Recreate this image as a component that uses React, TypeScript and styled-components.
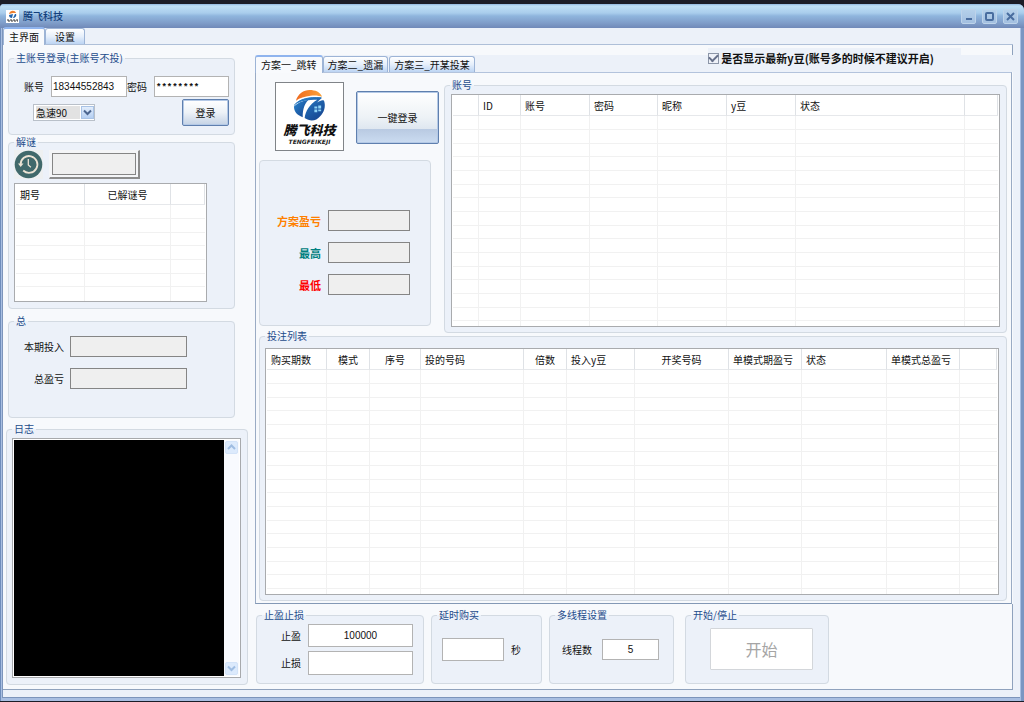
import React from 'react';
import styled, { createGlobalStyle, css } from 'styled-components';

const GlobalStyle = createGlobalStyle`
  * { box-sizing: border-box; }
  body {
    margin: 0;
    background: #1b1d27;
    font: 10px/14px "Noto Sans CJK SC", "Noto Sans", sans-serif;
    color: #111;
  }
  button, input, select, textarea { font: inherit; color: inherit; margin: 0; }
`;

const cjk = '"Noto Sans CJK SC", sans-serif';

/* ---------- window frame ---------- */
const Desktop = styled.div`
  min-height: 100vh;
  display: flex;
  padding: 4px 0 1px;
  background: #1b1d27;
`;
const Window = styled.div`
  flex: 1;
  min-width: 0;
  display: flex;
  flex-direction: column;
  border-radius: 4px 6px 0 0;
  overflow: hidden;
  background: linear-gradient(90deg, #6f8dbb 0 1px, #a9bfe2 1px calc(100% - 3px), #7a96c2 calc(100% - 3px));
`;
const TitleBar = styled.header`
  height: 24px;
  flex: none;
  display: flex;
  align-items: center;
  gap: 4px;
  padding: 0 6px;
  background: linear-gradient(#8fb6de 0, #bfe0f5 2px, #a9cdec 9px, #8fb5dd 12px, #7f9dc9 19px, #7089b8 24px);
`;
const TitleText = styled.h1`
  margin: 0;
  flex: 1;
  font-size: 10px;
  line-height: 14px;
  font-weight: 500;
  color: #123f7c;
`;
const WindowButtons = styled.div`
  display: flex;
  gap: 6px;
`;
const WindowButton = styled.button`
  width: 15px;
  height: 15px;
  padding: 0;
  display: grid;
  place-items: center;
  border: 1px solid #bdd3ea;
  border-radius: 2px;
  background: linear-gradient(#b4d0ea, #a3bfe0);
`;
const Body = styled.main`
  flex: 1;
  display: flex;
  flex-direction: column;
  margin: 0 4px 3px 2px;
  padding: 1px 0 7px;
  border: solid #7d95bb;
  border-width: 0 0 1px 1px;
  background: #ecf1f9;
`;

/* ---------- tabs ---------- */
const TabStrip = styled.div`
  display: flex;
  align-items: flex-end;
`;
const Tab = styled.button<{ $active?: boolean }>`
  height: 16px;
  padding: 0 4px;
  white-space: nowrap;
  line-height: 14px;
  border: 1px solid #9db4d6;
  border-bottom: 0;
  border-radius: 3px 3px 0 0;
  background: linear-gradient(#fff, #e6effb 50%, #bcd4f3);
  ${(p) =>
    p.$active &&
    css`
      height: 18px;
      margin-bottom: -1px;
      padding: 0 5px;
      position: relative;
      border-top: 2px solid #8fb4ee;
      background: #f8fafd;
    `}
`;
const MainTabs = styled(TabStrip)`
  height: 15px;
  ${Tab}:last-child { padding: 0 9px; }
`;
const Page = styled.div`
  flex: 1;
  display: flex;
  gap: 7px;
  margin-right: 7px;
  padding-left: 3px;
  border-top: 1px solid #aebfd8;
  border-bottom: 1px solid #8fa2bd;
  background: #f7f9fc;
`;

/* ---------- group boxes ---------- */
const Group = styled.fieldset`
  margin: 0;
  padding: 0;
  min-width: 0;
  border: 1px solid #d3dae2;
  border-radius: 4px;
  background: #ecf1f9;
`;
const Legend = styled.legend`
  margin-left: 5px;
  padding: 0 2px;
  line-height: 14px;
  color: #1d4c8b;
`;

/* ---------- controls ---------- */
const Field = styled.label<{ $gap?: number }>`
  display: flex;
  align-items: center;
  justify-content: flex-end;
  gap: ${(p) => p.$gap ?? 7}px;
`;
const TextBox = styled.input<{ $w: number; $h?: number; $center?: boolean }>`
  width: ${(p) => p.$w}px;
  height: ${(p) => p.$h ?? 21}px;
  padding: 0 1px;
  border: 1px solid #b3b3b3;
  border-radius: 0;
  background: #fff;
  font-family: "Liberation Sans", sans-serif;
  text-align: ${(p) => (p.$center ? 'center' : 'left')};
  &:read-only { background: #efefef; border-color: #858585; }
`;
const MaskedBox = styled(TextBox)`
  padding-top: 3px;
  font: 700 9px "Liberation Mono", monospace;
`;
const SunkenFrame = styled.div`
  padding: 2px;
  border: 1px solid #f4f5f7;
  border-right: 2px solid #8c8c8c;
  border-bottom: 2px solid #8c8c8c;
  background: #f4f5f7;
  display: flex;
`;
const PushButton = styled.button`
  border: 1px solid #5f7fae;
  border-radius: 2px;
  box-shadow: inset 0 0 0 1px #b4c9e6;
  background: linear-gradient(#fff, #edf2f7 50%, #c4d2e5);
`;
const LoginButton = styled(PushButton)`
  width: 47px;
  height: 27px;
  padding: 0;
`;
const OneKeyButton = styled(PushButton)`
  width: 83px;
  height: 53px;
  margin-top: 9px;
  background: linear-gradient(#fff, #edf2f6 50%, #dfe7f0 72%, #b9cae2 73%, #cbdcf1);
`;
const StartButton = styled.button`
  width: 103px;
  height: 42px;
  border: 1px solid #d3d6da;
  border-radius: 1px;
  background: #fff;
  font-size: 16px;
  line-height: 20px;
  &:disabled { color: #a5a5a5; }
`;
const SelectFrame = styled.div`
  display: flex;
  width: 62px;
  height: 17px;
  padding: 1px 0 1px 2px;
  border: 1px solid #b9c0c9;
  background: #fff;
`;
const Select = styled.select`
  appearance: none;
  width: 44px;
  height: 13px;
  margin: 0 1px 0 0;
  padding: 0;
  border: 0;
  border-radius: 0;
  line-height: 13px;
  background: #e2e2e2;
`;
const ArrowBox = styled.span`
  width: 13px;
  display: grid;
  place-items: center;
  border: 1px solid #a9c3e6;
  background: linear-gradient(#e3eefc, #b5cff2);
  color: #4c6690;
`;

/* ---------- data tables ---------- */
const TableFrame = styled.div`
  overflow: hidden;
  padding: 0 1px;
  border: 1px solid #a9abae;
  background: #fff;
`;
const Table = styled.table`
  width: 100%;
  table-layout: fixed;
  border-collapse: separate;
  border-spacing: 0;
  th {
    height: 21px;
    padding: 1px 0 0 4px;
    text-align: left;
    font-weight: 400;
    white-space: nowrap;
    border-right: 1px solid #dfe2e6;
    border-bottom: 1px solid #e6e8eb;
  }
  th.center { text-align: center; padding-left: 0; }
  td {
    height: 14px;
    padding: 0;
    border-right: 1px solid #f1f1f1;
    border-bottom: 1px solid #f1f1f1;
  }
  tr:nth-child(3n) td { height: 13px; }
  td:last-child { border-right: 0; }
  tr:last-child td { border-bottom: 0; }
  tr.tail td { height: 5px; }
`;

/* ---------- left column ---------- */
const Left = styled.div`
  flex: none;
  width: 242px;
  display: flex;
  flex-direction: column;
  padding: 6px 0 4px;
`;
const SideGroup = styled(Group)`
  margin: 0 13px 0 2px;
`;
const LoginBody = styled.div`
  padding: 11px 5px 8px 15px;
`;
const Row = styled.div`
  display: flex;
  align-items: center;
`;
const LoginRow = styled(Row)`
  justify-content: space-between;
  margin-top: 2px;
  padding-left: 9px;
`;
const SolveBody = styled.div`
  padding: 1px 27px 6px 5px;
`;
const SolveRow = styled(Row)`
  gap: 6px;
  height: 29px;
  margin-bottom: 4px;
`;
const TotalBody = styled.div`
  display: flex;
  flex-direction: column;
  align-items: flex-end;
  gap: 11px;
  padding: 8px 47px 28px 0;
`;
const LogGroup = styled(Group)`
  flex: 1;
  display: flex;
  flex-direction: column;
  margin-top: 4px;
`;
const SolveGroup = styled(SideGroup)`
  margin-bottom: 5px;
`;
const LogFrame = styled.div`
  flex: 1;
  display: flex;
  margin: 2px 6px 6px 5px;
  padding: 1px;
  border: 1px solid #a7a9ac;
  background: #fff;
`;
const Log = styled.textarea`
  flex: 1;
  min-width: 0;
  resize: none;
  border: 0;
  border-radius: 0;
  padding: 2px;
  overflow: hidden;
  background: #000;
  color: #fff;
`;
const ScrollTrack = styled.div`
  width: 15px;
  display: flex;
  flex-direction: column;
  justify-content: space-between;
  padding: 1px;
  background: #f8fafe;
`;
const ScrollButton = styled.button`
  width: 13px;
  height: 13px;
  padding: 0;
  display: grid;
  place-items: center;
  border: 1px solid #d3e3f8;
  border-radius: 2px;
  background: #dceafc;
  color: #9fbde2;
`;

/* ---------- right column ---------- */
const Right = styled.div`
  flex: 1;
  min-width: 0;
  display: flex;
  flex-direction: column;
`;
const PlanStrip = styled(TabStrip)`
  height: 27px;
  background:
    linear-gradient(#8fa2bd, #8fa2bd) right top / 1px 10px no-repeat,
    linear-gradient(#f7f9fc 10px, #ecf1f9 10px);
  ${Tab} + ${Tab} { margin-right: 1px; }
`;
const Option = styled.label`
  align-self: flex-start;
  display: flex;
  align-items: center;
  gap: 2px;
  height: 20px;
  margin: 3px 52px 0 auto;
  padding-right: 27px;
  font: 700 11px/16px ${cjk};
  white-space: nowrap;
  background: #ecf1f9;
`;
const CheckBox = styled.input`
  appearance: none;
  width: 11px;
  height: 11px;
  border: 1px solid #8c96a8;
  background: #eef1f8;
  display: grid;
  place-items: center;
  &:checked::before {
    content: '';
    width: 7px;
    height: 4px;
    border: solid #66708a;
    border-width: 0 0 2px 2px;
    transform: translateY(-1px) rotate(-45deg);
  }
`;
const Plan = styled.section`
  flex: 1;
  display: flex;
  flex-direction: column;
  margin-right: 1px;
  padding: 5px 4px 2px 3px;
  border: 1px solid #9aabc4;
  border-top-color: #b3c3dc;
  border-bottom-color: #8398b5;
  background: #f7f9fc;
`;
const PlanTop = styled.div`
  display: flex;
`;
const PlanSide = styled.div`
  flex: none;
  width: 185px;
`;
const Brand = styled.div`
  display: flex;
  gap: 12px;
  padding: 4px 0 9px 16px;
`;
const LogoCard = styled.div`
  width: 69px;
  height: 69px;
  padding-top: 6px;
  display: flex;
  flex-direction: column;
  align-items: center;
  border: 1px solid #808488;
  background: #fff;
  overflow: hidden;
`;
const LogoName = styled.strong`
  font: italic 900 13px/16px ${cjk};
`;
const LogoLatin = styled.small`
  margin-top: 1px;
  font: italic 700 6px/6px "DejaVu Sans", sans-serif;
  color: #222;
`;
const ProfitPanel = styled.div`
  width: 172px;
  height: 166px;
  display: flex;
  flex-direction: column;
  align-items: flex-end;
  gap: 11px;
  padding: 49px 20px 0 0;
  border: 1px solid #d3dae2;
  border-radius: 4px;
  background: #ecf1f9;
`;
const ProfitLabel = styled.span<{ $color: string }>`
  font-size: 11px;
  font-weight: 700;
  color: ${(p) => p.$color};
`;
const AccountGroup = styled(Group)`
  flex: 1;
  height: 255px;
`;
const AccountBody = styled.div`
  padding: 2px 6px 5px;
`;
const BetGroup = styled(Group)`
  margin-top: -4px;
`;
const BetBody = styled.div`
  padding: 5px 7px 5px 5px;
`;
const Bottom = styled.div`
  display: flex;
  gap: 7px;
  padding: 4px 0 5px 1px;
  border-right: 1px solid #8fa2bd;
`;
const BottomGroup = styled(Group)<{ $w: number }>`
  width: ${(p) => p.$w}px;
  height: 76px;
`;
const StopBody = styled.div`
  display: flex;
  flex-direction: column;
  gap: 4px;
  padding: 2px 10px 0 0;
`;
const FieldBody = styled.div<{ $top: number; $left: number }>`
  display: flex;
  padding: ${(p) => p.$top}px 0 0 ${(p) => p.$left}px;
`;
const StartGroup = styled(BottomGroup)`
  margin-left: 4px;
`;

/* ---------- drawings ---------- */
const LogoMark = ({ size }: { size: number }) => (
  <svg width={size} height={size} viewBox="0 0 34 34" aria-hidden="true">
    <defs>
      <linearGradient id="blue" x1="0" y1="0" x2="1" y2="1">
        <stop offset="0" stopColor="#2a86cf" />
        <stop offset="1" stopColor="#153f8a" />
      </linearGradient>
      <linearGradient id="orange" x1="0" x2="1">
        <stop offset="0" stopColor="#ef6a1f" />
        <stop offset="1" stopColor="#f9a23a" />
      </linearGradient>
    </defs>
    <path d="M3 12C5 5 11 1 17 1c6 0 11 2 13 7-3-1-7-2-12-1C12 8 7 9 3 12z" fill="url(#orange)" />
    <path d="M1 18c4-4 9-6 15-7-4 4-6 9-6 18C4 27 1 23 1 18z" fill="url(#blue)" />
    <path d="M12 30c1-8 5-14 13-19-9 0-17 1-23 5 5-6 13-8 28-7-2 2-4 3-5 5 3-2 5-3 7-2 2 6 0 12-4 16-4 5-10 6-16 2z" fill="url(#blue)" />
    <path d="M1 17C7 10 17 8 29 9" fill="none" stroke="#2576c0" strokeWidth="1" />
    <path d="M22 18h3v2h-3zM26 17h3v3h-3zM22 21h3v3h-3zM26 21h3v2h-3z" fill="#8fd4f6" />
  </svg>
);
const AppIconFrame = styled.span`
  width: 13px;
  height: 13px;
  display: grid;
  justify-items: center;
  background: #fff;
`;
const AppIcon = () => (
  <AppIconFrame>
    <svg width="13" height="13" viewBox="0 0 13 13" aria-hidden="true">
      <path d="M3 4c1-4 6-4 7-1L7 3z" fill="#ee8030" />
      <path d="M3 5l4-1-1 4C4 8 3 7 3 5zM7 8l2-4h1c1 2-1 4-3 4z" fill="#2465ad" />
      <path d="M1 10h11M2 11h10" stroke="#333" strokeWidth="1" strokeDasharray="2 1" />
    </svg>
  </AppIconFrame>
);
const HistoryIcon = () => (
  <svg width="29" height="29" viewBox="0 0 29 29" aria-hidden="true">
    <rect width="29" height="29" fill="#eef0f1" />
    <circle cx="14.5" cy="14.5" r="13.8" fill="#41696b" />
    <path d="M6.600 14.500a8.400 8.400 0 1 1 2.600 6" fill="none" stroke="#ece3d4" strokeWidth="1.8" />
    <path d="M4 13.500h5.500l-2.800 3.400z" fill="#ece3d4" />
    <path d="M14.300 9v6l2.600 2.200" fill="none" stroke="#ece3d4" strokeWidth="1.3" />
  </svg>
);
const Chevron = ({ up }: { up?: boolean }) => (
  <svg width="9" height="7" viewBox="0 0 9 7" aria-hidden="true">
    <path d={up ? 'M1 5l3.500-3.500L8 5' : 'M1 1.500L4.500 5 8 1.500'} fill="none" stroke="currentColor" strokeWidth="2" />
  </svg>
);

/* ---------- data ---------- */
type Column = { title: string; width?: number; center?: boolean };

const solveColumns: Column[] = [
  { title: '期号', width: 69 },
  { title: '已解谜号', width: 86, center: true },
  { title: '' },
];
const accountColumns: Column[] = [
  { title: '', width: 26 },
  { title: 'ID', width: 42 },
  { title: '账号', width: 69 },
  { title: '密码', width: 68 },
  { title: '昵称', width: 69 },
  { title: 'y豆', width: 69 },
  { title: '状态' },
  { title: '', width: 33 },
];
const betColumns: Column[] = [
  { title: '购买期数', width: 60 },
  { title: '模式', width: 43, center: true },
  { title: '序号', width: 51, center: true },
  { title: '投的号码', width: 103 },
  { title: '倍数', width: 43, center: true },
  { title: '投入y豆', width: 68 },
  { title: '开奖号码', width: 94, center: true },
  { title: '单模式期盈亏', width: 73 },
  { title: '状态' },
  { title: '单模式总盈亏', width: 73 },
  { title: '', width: 37 },
];

function DataTable({ label, columns, rows, tail }: { label: string; columns: Column[]; rows: number; tail?: boolean }) {
  return (
    <TableFrame>
      <Table aria-label={label}>
        <colgroup>
          {columns.map((c, i) => (
            <col key={i} width={c.width} />
          ))}
        </colgroup>
        <thead>
          <tr>
            {columns.map((c, i) => (
              <th key={i} scope="col" className={c.center ? 'center' : undefined}>
                {c.title}
              </th>
            ))}
          </tr>
        </thead>
        <tbody>
          {Array.from({ length: rows + (tail ? 1 : 0) }, (_, r) => (
            <tr key={r} className={r === rows ? 'tail' : undefined}>
              {columns.map((_c, i) => (
                <td key={i} />
              ))}
            </tr>
          ))}
        </tbody>
      </Table>
    </TableFrame>
  );
}

export default function App() {
  return (
    <Desktop>
      <GlobalStyle />
      <Window>
        <TitleBar>
          <AppIcon />
          <TitleText>腾飞科技</TitleText>
          <WindowButtons>
            <WindowButton aria-label="最小化">
              <svg width="11" height="11"><path d="M3 8h6" stroke="#496d9f" strokeWidth="2" /></svg>
            </WindowButton>
            <WindowButton aria-label="最大化">
              <svg width="11" height="11"><rect x="2" y="2" width="7" height="7" rx="1" fill="none" stroke="#496d9f" strokeWidth="2" /></svg>
            </WindowButton>
            <WindowButton aria-label="关闭">
              <svg width="11" height="11"><path d="M2 2l7 7M9 2l-7 7" stroke="#496d9f" strokeWidth="2" /></svg>
            </WindowButton>
          </WindowButtons>
        </TitleBar>
        <Body>
          <MainTabs>
            <Tab $active>主界面</Tab>
            <Tab>设置</Tab>
          </MainTabs>
          <Page>
            <Left>
              <SideGroup>
                <Legend>主账号登录(主账号不投)</Legend>
                <LoginBody>
                  <Row>
                    <Field>账号<TextBox $w={76} defaultValue="18344552843" /></Field>
                    <Field>密码<MaskedBox $w={75} defaultValue="********" /></Field>
                  </Row>
                  <LoginRow>
                    <SelectFrame>
                      <Select aria-label="模式"><option>急速90</option></Select>
                      <ArrowBox><Chevron /></ArrowBox>
                    </SelectFrame>
                    <LoginButton>登录</LoginButton>
                  </LoginRow>
                </LoginBody>
              </SideGroup>
              <SolveGroup>
                <Legend>解谜</Legend>
                <SolveBody>
                  <SolveRow>
                    <HistoryIcon />
                    <SunkenFrame>
                      <TextBox $w={84} $h={22} readOnly aria-label="解谜" />
                    </SunkenFrame>
                  </SolveRow>
                  <DataTable label="解谜" columns={solveColumns} rows={7} />
                </SolveBody>
              </SolveGroup>
              <SideGroup>
                <Legend>总</Legend>
                <TotalBody>
                  <Field $gap={6}>本期投入<TextBox $w={117} readOnly /></Field>
                  <Field $gap={6}>总盈亏<TextBox $w={117} readOnly /></Field>
                </TotalBody>
              </SideGroup>
              <LogGroup>
                <Legend>日志</Legend>
                <LogFrame>
                  <Log aria-label="日志" />
                  <ScrollTrack>
                    <ScrollButton aria-label="向上"><Chevron up /></ScrollButton>
                    <ScrollButton aria-label="向下"><Chevron /></ScrollButton>
                  </ScrollTrack>
                </LogFrame>
              </LogGroup>
            </Left>
            <Right>
              <PlanStrip>
                <Tab $active>方案一_跳转</Tab>
                <Tab>方案二_遗漏</Tab>
                <Tab>方案三_开某投某</Tab>
                <Option>
                  <CheckBox type="checkbox" defaultChecked />
                  是否显示最新y豆(账号多的时候不建议开启)
                </Option>
              </PlanStrip>
              <Plan>
                <PlanTop>
                  <PlanSide>
                    <Brand>
                      <LogoCard>
                        <LogoMark size={33} />
                        <LogoName>腾飞科技</LogoName>
                        <LogoLatin>TENGFEIKEJI</LogoLatin>
                      </LogoCard>
                      <OneKeyButton>一键登录</OneKeyButton>
                    </Brand>
                    <ProfitPanel>
                      <Field><ProfitLabel $color="#ff8000">方案盈亏</ProfitLabel><TextBox $w={82} readOnly /></Field>
                      <Field><ProfitLabel $color="#008080">最高</ProfitLabel><TextBox $w={82} readOnly /></Field>
                      <Field><ProfitLabel $color="#ff0000">最低</ProfitLabel><TextBox $w={82} readOnly /></Field>
                    </ProfitPanel>
                  </PlanSide>
                  <AccountGroup>
                    <Legend>账号</Legend>
                    <AccountBody>
                      <DataTable label="账号" columns={accountColumns} rows={15} tail />
                    </AccountBody>
                  </AccountGroup>
                </PlanTop>
                <BetGroup>
                  <Legend>投注列表</Legend>
                  <BetBody>
                    <DataTable label="投注列表" columns={betColumns} rows={16} tail />
                  </BetBody>
                </BetGroup>
              </Plan>
              <Bottom>
                <BottomGroup $w={168}>
                  <Legend>止盈止损</Legend>
                  <StopBody>
                    <Field>止盈<TextBox $w={105} $h={23} $center defaultValue="100000" /></Field>
                    <Field>止损<TextBox $w={105} $h={24} $center /></Field>
                  </StopBody>
                </BottomGroup>
                <BottomGroup $w={111}>
                  <Legend>延时购买</Legend>
                  <FieldBody $top={16} $left={10}>
                    <Field><TextBox $w={62} $h={23} />秒</Field>
                  </FieldBody>
                </BottomGroup>
                <BottomGroup $w={125}>
                  <Legend>多线程设置</Legend>
                  <FieldBody $top={17} $left={12}>
                    <Field $gap={10}>线程数<TextBox $w={57} $center defaultValue="5" /></Field>
                  </FieldBody>
                </BottomGroup>
                <StartGroup $w={144}>
                  <Legend>开始/停止</Legend>
                  <FieldBody $top={6} $left={24}>
                    <StartButton disabled>开始</StartButton>
                  </FieldBody>
                </StartGroup>
              </Bottom>
            </Right>
          </Page>
        </Body>
      </Window>
    </Desktop>
  );
}
